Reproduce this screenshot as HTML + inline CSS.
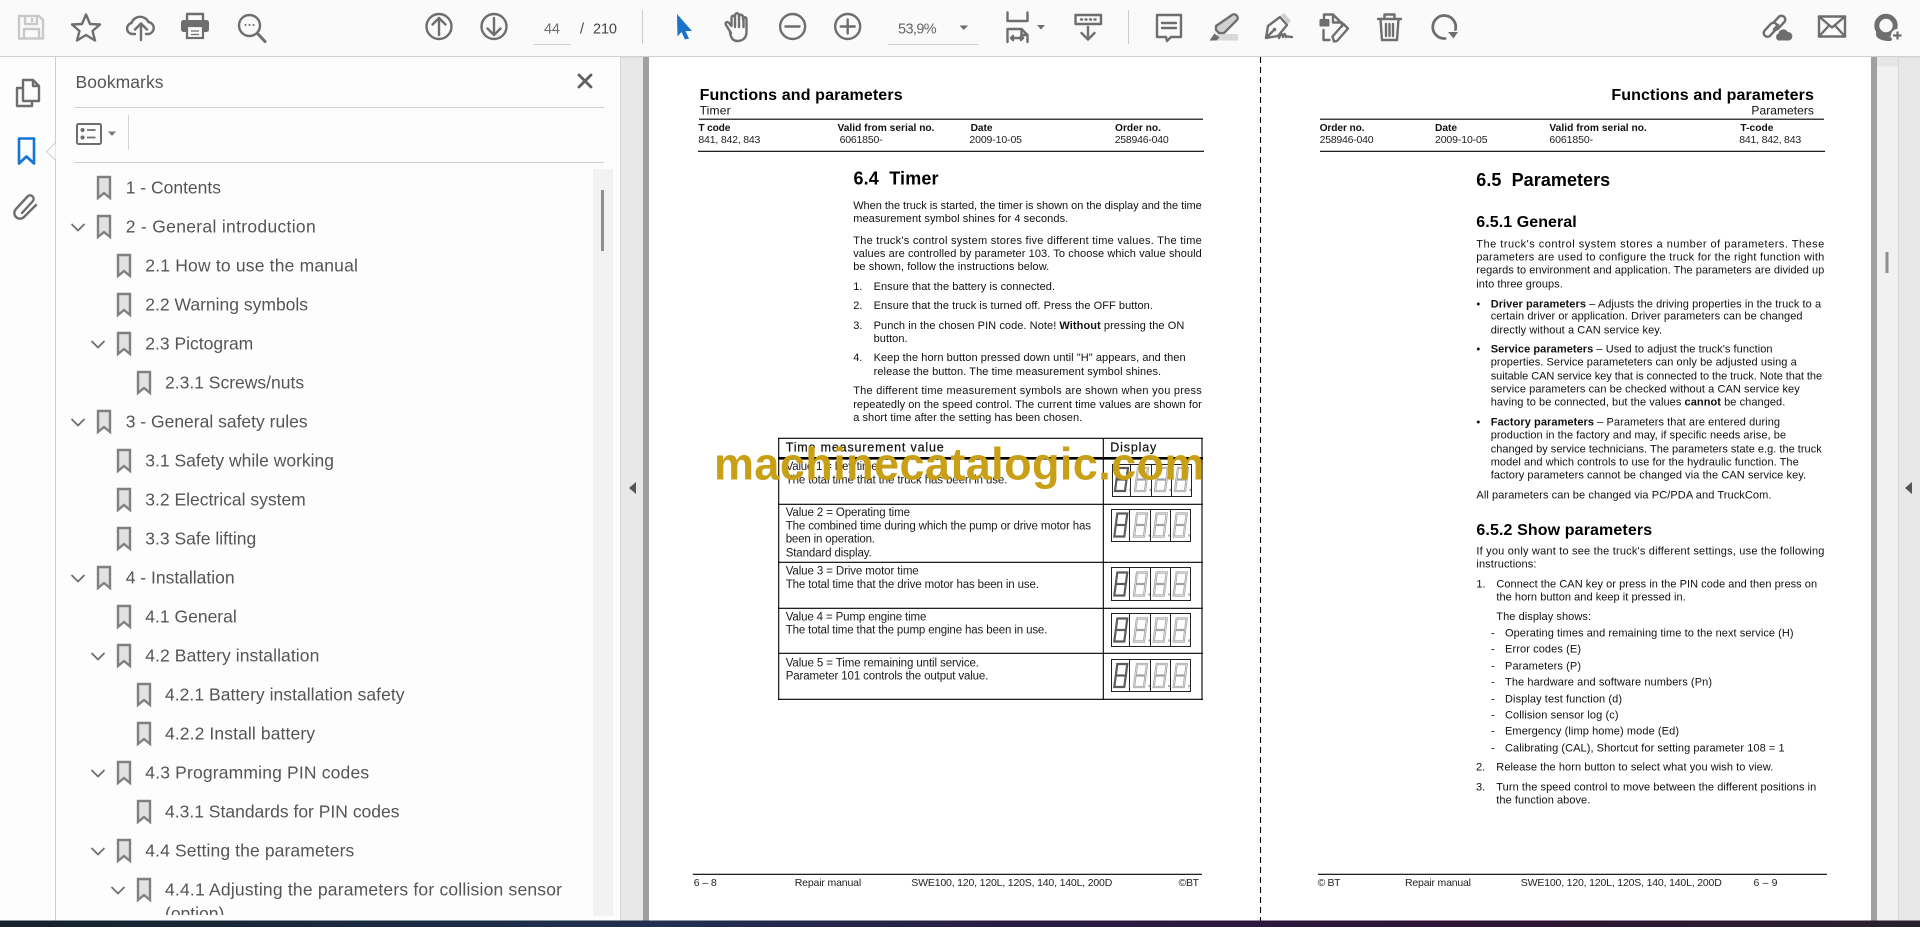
<!DOCTYPE html>
<html lang="en"><head><meta charset="utf-8"><title>Repair manual</title>
<style>
html,body{margin:0;padding:0;width:1920px;height:927px;overflow:hidden;background:#fff}
svg{display:block;font-family:"Liberation Sans",sans-serif}
.i{fill:none;stroke:#6e6e6e;stroke-width:2.400;stroke-linecap:round;stroke-linejoin:round}
.b{font-size:17.5px;fill:#555}
.p{font-size:11px;fill:#111}
.h{font-size:10.200px;font-weight:bold;fill:#111}
.v{font-size:10.500px;fill:#222}
.t{font-size:11.500px;fill:#1c1c1c}
.f{font-size:10.500px;fill:#222}
.g{font-weight:bold;fill:#000}
</style></head><body>
<svg width="1920" height="927" viewBox="0 0 1920 927" xmlns="http://www.w3.org/2000/svg">
<defs><clipPath id="bm"><rect x="56" y="166" width="536" height="749"/></clipPath></defs>
<rect width="1920" height="927" fill="#e8e8e8"/>
<!-- toolbar -->
<rect width="1920" height="56" fill="#fafafa"/>
<rect y="56" width="1920" height="1.400" fill="#cfcfcf"/>
<!-- left rail and panel -->
<rect y="57" width="56" height="864" fill="#fdfdfd"/>
<rect x="55" y="57" width="1" height="864" fill="#cfcfcf"/>
<rect x="56" y="57" width="564" height="864" fill="#fdfdfd"/>
<rect x="620" y="57" width="1" height="864" fill="#d4d4d4"/>
<path d="M55.500 143L46.500 151.500 55.500 160" fill="#fdfdfd" stroke="#cfcfcf"/>
<rect x="56" y="143" width="1" height="17" fill="#fdfdfd"/>
<!-- gutter & pages -->
<rect x="643" y="57" width="6" height="864" fill="#a0a0a0"/>
<rect x="649" y="57" width="1222" height="864" fill="#fff"/>
<rect x="1871" y="57" width="6" height="864" fill="#a0a0a0"/>
<rect x="1877" y="57" width="21" height="864" fill="#f1f1f1"/>
<rect x="1877" y="57" width="21" height="9.500" fill="#e6e6e6"/>
<rect x="1885.500" y="252" width="3" height="21" fill="#8f8f8f"/>
<rect x="1898" y="57" width="1" height="864" fill="#d8d8d8"/>
<path d="M636 482v12l-7-6zM1912 482v12l-7-6z" fill="#555"/>
<path d="M1260.500 57V921" stroke="#000" stroke-width="1.100" stroke-dasharray="6 4"/>
<!-- taskbar -->
<defs><linearGradient id="tb" x1="0" x2="1" y1="0" y2="0"><stop offset="0" stop-color="#15222c"/><stop offset=".34" stop-color="#1f3050"/><stop offset=".52" stop-color="#2a1d45"/><stop offset=".78" stop-color="#2e1335"/><stop offset="1" stop-color="#2a202e"/></linearGradient></defs>
<rect y="920.500" width="1920" height="6.500" fill="url(#tb)"/>

<!-- toolbar icons -->
<path style="fill:none;stroke:#c9c9c9;stroke-width:2.400;stroke-linejoin:round" d="M19 16h20l4 4v18.500H19zM25 16v8h12v-8M32 18v4M24 38v-9h15v9"/>
<g class="i">
<path d="M86 14.500L90 24l10 .5-7.500 6.500 2.500 9.500-9-5.500-9 5.500 2.500-9.500-7.500-6.500 10-.5z"/>
<path d="M135 34h-2.500a5.500 5.500 0 0 1-1-10.900a9 8.500 0 0 1 17-1a6 6 0 0 1 0 11.900h-2.500M141 40V24M135 29.500l6-6 6 6"/>
<path d="M187 20v-6h16v6"/>
<circle cx="249.500" cy="25.500" r="10.500"/>
<path d="M257.500 33.500l7.500 8" stroke-width="3"/>
<circle cx="439" cy="26.500" r="12.500"/><path d="M439 35V18M432.500 24.500l6.500-6.500 6.500 6.500"/>
<circle cx="494" cy="26.500" r="12.500"/><path d="M494 18v17M487.500 28.500l6.500 6.500 6.500-6.500"/>
<path d="M731 33l-5-8c-1.500-2.500 1.500-4 3-2l2.500 3V18c0-3 3.500-3 3.500 0v-2.500c0-3 4-3 4 0V17c0-3 4-3 4 0v2.500c0-3 3.500-3 3.500 0V32c0 6-4 9-9 9-4 0-6-2-7.500-8zM735 18v9M739 16v11M743.500 18v9"/>
<circle cx="792.600" cy="26.500" r="12.500"/><path d="M785.500 26.500h14"/>
<circle cx="847.700" cy="26.500" r="12.500"/><path d="M840.700 26.500h14M847.700 19.500v14"/>
<path d="M1007.500 12.500v8.500h20v-8.500M1007.500 42V29h14l6 6v7M1021.500 29v6h6M1011 38h12M1013 36l-2 2 2 2M1021 36l2 2-2 2"/>
<rect x="1075.500" y="15" width="25.500" height="9"/><path d="M1088 27v12M1081.500 33l6.500 6.500 6.500-6.500M1081 19.500h1M1085.500 19.500h1M1090 19.500h1M1094.500 19.500h1"/>
<path d="M1157 15h24v22h-10l-4 4-1-4h-9zM1162 23h14M1162 28h14"/>
<path d="M1324 19v-4.500h9l9 9v3M1333 14.500v8h9M1323.500 30v10h6M1334 41.500l-1.500-5 11-12.500 4.500 4.500-11 12.500z"/>
<path d="M1378 19h23M1384.500 19v-4.500h10V19M1380.500 19l1.500 21h15l1.500-21M1386 24v12M1389.500 24v12M1393 24v12"/>
<path d="M1445 38.500a11.500 11.500 0 1 1 10.500-9" stroke-width="2.800"/>
<rect x="1819" y="16.500" width="26" height="20"/><path d="M1819 16.500l13 11 13-11M1819 36.500l10-11M1845 36.500l-10-11"/>
</g>
<!-- highlighter -->
<rect x="1217" y="34" width="21" height="6.500" fill="#d8d8d8"/>
<path d="M1232 15a3 3 0 0 1 4 0l1 1a3 3 0 0 1 0 4L1224 33h-5l-3-3v-4z" fill="#d0d0d0" stroke="#6e6e6e" stroke-width="2.300" stroke-linejoin="round"/>
<path d="M1209.500 40.500l5-7 5 4-3 3z" fill="#6e6e6e"/>
<!-- pen nib -->
<path d="M1281 15l3-2 7 8-3 3z" fill="#cfcfcf"/>
<path d="M1266 38l2-12 12-9 7 8-9 11zM1266 38l7-7" class="i"/>
<circle cx="1274.500" cy="29.500" r="1.800" fill="#6e6e6e"/>
<path d="M1279 38c2-5 3-5 4-1 1-4 2-4 3 0 1-1 3 0 6 0" class="i" stroke-width="2"/>
<!-- printer -->
<rect x="181" y="20" width="28" height="12" rx="2.500" fill="#6e6e6e"/>
<rect x="187" y="26" width="16" height="12" fill="#fafafa" stroke="#6e6e6e" stroke-width="2.200"/>
<path d="M191 31h8M191 34.500h8" stroke="#6e6e6e" stroke-width="1.300"/>
<path d="M245.500 25h.1M249.500 25h.1M253.500 25h.1" stroke="#6e6e6e" stroke-width="2" stroke-linecap="round"/>
<path d="M677 14L692 31H685.500L689 38.500 685 39.500 681.500 32 677.500 36.500z" fill="#1a72c9"/>
<rect x="1319.500" y="19" width="10" height="7.500" rx="1" fill="#6e6e6e"/>
<path d="M1448 32h10l-4.500 6.500z" fill="#6e6e6e"/>
<path d="M959.500 25.500h8.500l-4.200 4.500zM1037 25h8l-4 4.500z" fill="#6e6e6e"/>
<!-- chain link + cloud -->
<g fill="none" stroke-linecap="round">
<path d="M1781.500 19.500L1775.500 26" stroke="#6e6e6e" stroke-width="10"/>
<path d="M1781.500 19.500L1775.500 26" stroke="#fafafa" stroke-width="5"/>
<path d="M1767.500 33L1773.500 26.500" stroke="#6e6e6e" stroke-width="10"/>
<path d="M1767.500 33L1773.500 26.500" stroke="#fafafa" stroke-width="5"/>
<path d="M1774 29.500L1778 25" stroke="#6e6e6e" stroke-width="2.600"/>
</g>
<path d="M1778 41a4.500 4.500 0 0 1 0-8a5.500 5.500 0 0 1 10-1.500a4.800 4.800 0 0 1 1 9.500z" fill="#6e6e6e" stroke="#fafafa" stroke-width="1"/>
<!-- user add -->
<circle cx="1886" cy="25.500" r="9.200" fill="none" stroke="#6e6e6e" stroke-width="5"/>
<path d="M1878 33c-1 4 5 6 12 6" fill="none" stroke="#6e6e6e" stroke-width="4" stroke-linecap="round"/>
<circle cx="1897.500" cy="35.500" r="6.500" fill="#fafafa"/>
<path d="M1893 35.500h8.500M1897.500 31.500v8" stroke="#6e6e6e" stroke-width="2.200"/>

<rect x="642" y="10" width="1" height="34" fill="#ccc"/>
<rect x="1128" y="10" width="1" height="34" fill="#ccc"/>
<rect x="534" y="44" width="36.500" height="1" fill="#ccc"/>
<rect x="888" y="44" width="90" height="1" fill="#ccc"/>
<text x="544" y="33.300" font-size="14.500" fill="#6e6e6e" textLength="16">44</text>
<text x="580" y="33.300" font-size="14.500" fill="#444">/</text>
<text x="593" y="33.300" font-size="14.500" fill="#444" textLength="24">210</text>
<text x="898" y="33.300" font-size="14.500" fill="#666" textLength="38.700">53,9%</text>

<!-- rail icons -->
<g class="i">
<path d="M23 80h10l6 6v15H23zM33 80v6h6M23 88h-6v18h15v-5"/>
<path d="M22 213L33 201a3.600 3.600 0 0 0-5-5L16 209a5.500 5.500 0 0 0 8 8L36 205"/>
</g>
<path d="M19 138.500h15v25l-7.500-7-7.500 7z" fill="none" stroke="#1473d6" stroke-width="2.600" stroke-linejoin="round"/>

<!-- panel header -->
<text x="75.500" y="88" font-size="17.500" fill="#555" textLength="88">Bookmarks</text>
<path d="M579 75l12 12M591 75l-12 12" stroke="#606060" stroke-width="2.800" stroke-linecap="round"/>
<rect x="74" y="107" width="530" height="1" fill="#cfcfcf"/>
<rect x="74" y="162" width="530" height="1" fill="#cfcfcf"/>
<rect x="77" y="124" width="24" height="20" rx="1.500" fill="none" stroke="#6e6e6e" stroke-width="2"/>
<path d="M82.500 130h.1M82.500 137.500h.1" stroke="#6e6e6e" stroke-width="4" stroke-linecap="round"/>
<path d="M87 130h8.500M87 137.500h8.500" stroke="#6e6e6e" stroke-width="1.800"/>
<path d="M108 131.500h8l-4 4.500z" fill="#777"/>
<rect x="128" y="115" width="1" height="35" fill="#d4d4d4"/>
<rect x="593" y="169" width="20" height="747" fill="#f2f2f2"/>
<rect x="601" y="190" width="3" height="61" fill="#8f8f8f"/>

<!-- bookmarks -->
<g clip-path="url(#bm)">
<path fill="#e2e2e2" stroke="#808080" stroke-width="2.400" stroke-linejoin="miter" d="M98 177h12v21l-6-5-6 5zM98 216h12v21l-6-5-6 5zM118 255h12v21l-6-5-6 5zM118 294h12v21l-6-5-6 5zM118 333h12v21l-6-5-6 5zM138 372h12v21l-6-5-6 5zM98 411h12v21l-6-5-6 5zM118 450h12v21l-6-5-6 5zM118 489h12v21l-6-5-6 5zM118 528h12v21l-6-5-6 5zM98 567h12v21l-6-5-6 5zM118 606h12v21l-6-5-6 5zM118 645h12v21l-6-5-6 5zM138 684h12v21l-6-5-6 5zM138 723h12v21l-6-5-6 5zM118 762h12v21l-6-5-6 5zM138 801h12v21l-6-5-6 5zM118 840h12v21l-6-5-6 5zM138 879h12v21l-6-5-6 5z"/>
<path fill="none" stroke="#6e6e6e" stroke-width="1.700" d="M71.500 224l6.500 6.500 6.500-6.500M71.500 419l6.500 6.500 6.500-6.500M71.500 575l6.500 6.500 6.500-6.500M91.500 341l6.500 6.500 6.500-6.500M91.500 653l6.500 6.500 6.500-6.500M91.500 770l6.500 6.500 6.500-6.500M91.500 848l6.500 6.500 6.500-6.500M111.500 887l6.500 6.500 6.500-6.500"/>
<text class="b" x="125.700" y="193.600">1 - Contents</text>
<text class="b" x="125.700" y="232.600" textLength="190">2 - General introduction</text>
<text class="b" x="145.300" y="271.600" textLength="212.600">2.1 How to use the manual</text>
<text class="b" x="145.300" y="310.600">2.2 Warning symbols</text>
<text class="b" x="145.300" y="349.600">2.3 Pictogram</text>
<text class="b" x="165" y="388.600">2.3.1 Screws/nuts</text>
<text class="b" x="125.700" y="427.600">3 - General safety rules</text>
<text class="b" x="145.300" y="466.600">3.1 Safety while working</text>
<text class="b" x="145.300" y="505.600">3.2 Electrical system</text>
<text class="b" x="145.300" y="544.600">3.3 Safe lifting</text>
<text class="b" x="125.700" y="583.600">4 - Installation</text>
<text class="b" x="145.300" y="622.600">4.1 General</text>
<text class="b" x="145.300" y="661.600" textLength="174">4.2 Battery installation</text>
<text class="b" x="165" y="700.600" textLength="239.500">4.2.1 Battery installation safety</text>
<text class="b" x="165" y="739.600" textLength="150">4.2.2 Install battery</text>
<text class="b" x="145.300" y="778.600" textLength="223.800">4.3 Programming PIN codes</text>
<text class="b" x="165" y="817.600" textLength="234.500">4.3.1 Standards for PIN codes</text>
<text class="b" x="145.300" y="856.600" textLength="209">4.4 Setting the parameters</text>
<text class="b" x="165" y="895.600" textLength="397">4.4.1 Adjusting the parameters for collision sensor</text>
<text class="b" x="165" y="919.600">(option)</text>
</g>

<!-- LEFT PAGE -->
<text class="g" x="699.600" y="100" font-size="16" textLength="203">Functions and parameters</text>
<text x="699.600" y="114.300" font-size="12" fill="#111" textLength="31">Timer</text>
<path d="M699 119.200H1203M698 151.300H1204" stroke="#000" stroke-width="1.100"/>
<text class="h" x="698.400" y="131" textLength="32">T code</text>
<text class="h" x="837.500" y="131" textLength="97">Valid from serial no.</text>
<text class="h" x="970.600" y="131" textLength="22">Date</text>
<text class="h" x="1115" y="131" textLength="46">Order no.</text>
<text class="v" x="698.400" y="143" textLength="62">841, 842, 843</text>
<text class="v" x="839.600" y="143" textLength="43">6061850-</text>
<text class="v" x="969.400" y="143" textLength="52.600">2009-10-05</text>
<text class="v" x="1114.700" y="143" textLength="54">258946-040</text>
<text class="g" x="853.500" y="184.700" font-size="18" xml:space="preserve" textLength="85">6.4  Timer</text>

<text class="p" x="853.200" y="209" textLength="348.600">When the truck is started, the timer is shown on the display and the time</text>
<text class="p" x="853.200" y="222" textLength="215">measurement symbol shines for 4 seconds.</text>
<text class="p" x="853.200" y="244" textLength="348.600">The truck's control system stores five different time values. The time</text>
<text class="p" x="853.200" y="257" textLength="348.600">values are controlled by parameter 103. To choose which value should</text>
<text class="p" x="853.200" y="270" textLength="196">be shown, follow the instructions below.</text>
<text class="p" x="853.200" y="290">1.</text>
<text class="p" x="873.600" y="290" textLength="181.400">Ensure that the battery is connected.</text>
<text class="p" x="853.200" y="309">2.</text>
<text class="p" x="873.600" y="309" textLength="279.300">Ensure that the truck is turned off. Press the OFF button.</text>
<text class="p" x="853.200" y="329">3.</text>
<text class="p" x="873.600" y="329" textLength="310.700">Punch in the chosen PIN code. Note! <tspan font-weight="bold">Without</tspan> pressing the ON</text>
<text class="p" x="873.600" y="342" textLength="34">button.</text>
<text class="p" x="853.200" y="361">4.</text>
<text class="p" x="873.600" y="361" textLength="312">Keep the horn button pressed down until "H" appears, and then</text>
<text class="p" x="873.600" y="375" textLength="287.500">release the button. The time measurement symbol shines.</text>
<text class="p" x="853.200" y="394" textLength="348.600">The different time measurement symbols are shown when you press</text>
<text class="p" x="853.200" y="408" textLength="348.600">repeatedly on the speed control. The current time values are shown for</text>
<text class="p" x="853.200" y="421" textLength="229">a short time after the setting has been chosen.</text>

<!-- table -->
<path d="M778 438.300H1203M778 504.300H1203M778 562.300H1203M778 608.300H1203M778 653.300H1203M778 699.300H1203M778.700 438V700M1103.300 438V700M1202 438V700" stroke="#000" stroke-width="1.100" fill="none"/>
<path d="M778 458.300H1203" stroke="#000" stroke-width="2.600"/>
<text x="785.700" y="451.300" font-size="12.500" fill="#111" stroke="#111" stroke-width=".2" textLength="158">Time measurement value</text>
<text x="1110.300" y="451.300" font-size="12.500" fill="#111" stroke="#111" stroke-width=".2" textLength="46">Display</text>
<text class="t" x="785.700" y="470" textLength="92">Value 1 = Key time</text>
<text class="t" x="785.700" y="483.300" textLength="221.700">The total time that the truck has been in use.</text>
<text class="t" x="785.700" y="516" textLength="124.300">Value 2 = Operating time</text>
<text class="t" x="785.700" y="529.300" textLength="305.300">The combined time during which the pump or drive motor has</text>
<text class="t" x="785.700" y="542.300" textLength="89.300">been in operation.</text>
<text class="t" x="785.700" y="556.300" textLength="86">Standard display.</text>
<text class="t" x="785.700" y="574.300" textLength="133">Value 3 = Drive motor time</text>
<text class="t" x="785.700" y="588" textLength="253.300">The total time that the drive motor has been in use.</text>
<text class="t" x="785.700" y="620.300" textLength="140.700">Value 4 = Pump engine time</text>
<text class="t" x="785.700" y="633.300" textLength="261.700">The total time that the pump engine has been in use.</text>
<text class="t" x="785.700" y="666.300" textLength="193.300">Value 5 = Time remaining until service.</text>
<text class="t" x="785.700" y="679.300" textLength="202.700">Parameter 101 controls the output value.</text>

<!-- display boxes -->
<path fill="none" stroke="#222" stroke-width="1" d="M1112.500 464.500h79v32h-79zM1130.500 464.500v32M1151.500 464.500v32M1171.500 464.500v32M1111.500 509.500h79v32h-79zM1129.500 509.500v32M1150.500 509.500v32M1170.500 509.500v32M1111.500 567.500h79v33h-79zM1129.500 567.500v33M1150.500 567.500v33M1170.500 567.500v33M1111.500 613.500h79v33h-79zM1129.500 613.500v33M1150.500 613.500v33M1170.500 613.500v33M1111.500 659.500h79v32h-79zM1129.500 659.500v32M1150.500 659.500v32M1170.500 659.500v32"/>
<path fill="none" stroke="#a2a2a2" stroke-width="2.200" d="M1138 468h10l-3 23h-10zm-1.500 11.500h10m3 10.500h1.500M1158 468h10l-3 23h-10zm-1.500 11.500h10m3 10.500h1.500M1178 468h10l-3 23h-10zm-1.500 11.500h10m3 10.500h1.500M1137 513.500h10l-3 23h-10zm-1.500 11.500h10m3 10.500h1.500M1156.700 513.500h10l-3 23h-10zm-1.500 11.500h10m3 10.500h1.500M1176.700 513.500h10l-3 23h-10zm-1.500 11.500h10m3 10.500h1.500M1137 572.500h10l-3 23h-10zm-1.500 11.500h10m3 10.500h1.500M1156.700 572.500h10l-3 23h-10zm-1.500 11.500h10m3 10.500h1.500M1176.700 572.500h10l-3 23h-10zm-1.500 11.500h10m3 10.500h1.500M1137 618.500h10l-3 23h-10zm-1.500 11.500h10m3 10.500h1.500M1156.700 618.500h10l-3 23h-10zm-1.500 11.500h10m3 10.500h1.500M1176.700 618.500h10l-3 23h-10zm-1.500 11.500h10m3 10.500h1.500M1137 664h10l-3 23h-10zm-1.500 11.500h10m3 10.500h1.500M1156.700 664h10l-3 23h-10zm-1.500 11.500h10m3 10.500h1.500M1176.700 664h10l-3 23h-10zm-1.500 11.500h10m3 10.500h1.500"/>
<path fill="none" stroke="#5c5c5c" stroke-width="2.200" d="M1118 468h10l-3 23h-10zm-1.500 11.500h10m3 10.500h1M1117.300 513.500h10l-3 23h-10zm-1.500 11.500h10m3 10.500h1M1117.300 572.500h10l-3 23h-10zm-1.500 11.500h10m3 10.500h1M1117.300 618.500h10l-3 23h-10zm-1.500 11.500h10m3 10.500h1M1117.300 664h10l-3 23h-10zm-1.500 11.500h10m3 10.500h1"/>
<path fill="none" stroke="#e6e6e6" stroke-width=".7" d="M1138 468h10l-3 23h-10zM1158 468h10l-3 23h-10zM1178 468h10l-3 23h-10zM1137 513.500h10l-3 23h-10zM1156.700 513.500h10l-3 23h-10zM1176.700 513.500h10l-3 23h-10zM1137 572.500h10l-3 23h-10zM1156.700 572.500h10l-3 23h-10zM1176.700 572.500h10l-3 23h-10zM1137 618.500h10l-3 23h-10zM1156.700 618.500h10l-3 23h-10zM1176.700 618.500h10l-3 23h-10zM1137 664h10l-3 23h-10zM1156.700 664h10l-3 23h-10zM1176.700 664h10l-3 23h-10z"/>

<!-- left footer -->
<path d="M692.800 874.300H1202" stroke="#000" stroke-width="1.100"/>
<text class="f" x="693.700" y="886" textLength="23">6 – 8</text>
<text class="f" x="794.700" y="886" textLength="66.500">Repair manual</text>
<text class="f" x="911.300" y="886" textLength="201">SWE100, 120, 120L, 120S, 140, 140L, 200D</text>
<text class="f" x="1178.500" y="886" textLength="20.600">©BT</text>

<!-- RIGHT PAGE -->
<text class="g" x="1611.400" y="100" font-size="16" textLength="202.500">Functions and parameters</text>
<text x="1751.400" y="114.300" font-size="12" fill="#111" textLength="62.500">Parameters</text>
<path d="M1320 119.200H1824M1320 151.300H1825" stroke="#000" stroke-width="1.100"/>
<text class="h" x="1319.600" y="131" textLength="45">Order no.</text>
<text class="h" x="1435" y="131" textLength="22">Date</text>
<text class="h" x="1549.400" y="131" textLength="97.500">Valid from serial no.</text>
<text class="h" x="1740.400" y="131" textLength="33">T-code</text>
<text class="v" x="1319.600" y="143" textLength="54">258946-040</text>
<text class="v" x="1435" y="143" textLength="52.600">2009-10-05</text>
<text class="v" x="1549.400" y="143" textLength="43.700">6061850-</text>
<text class="v" x="1739.200" y="143" textLength="62">841, 842, 843</text>
<text class="g" x="1476.300" y="186" font-size="18" xml:space="preserve" textLength="133.900">6.5  Parameters</text>
<text class="g" x="1476.300" y="227" font-size="16" textLength="100.400">6.5.1 General</text>
<text class="p" x="1476.300" y="247.300" textLength="348">The truck's control system stores a number of parameters. These</text>
<text class="p" x="1476.300" y="260.300" textLength="348">parameters are used to configure the truck for the right function with</text>
<text class="p" x="1476.300" y="273.300" textLength="348">regards to environment and application. The parameters are divided up</text>
<text class="p" x="1476.300" y="287.300" textLength="86.500">into three groups.</text>

<text class="p" x="1476.400" y="307.300">•</text>
<text class="p" x="1490.700" y="307.300" textLength="330.400"><tspan font-weight="bold">Driver parameters</tspan> – Adjusts the driving properties in the truck to a</text>
<text class="p" x="1490.700" y="319.300" textLength="311.800">certain driver or application. Driver parameters can be changed</text>
<text class="p" x="1490.700" y="333.300" textLength="171.400">directly without a CAN service key.</text>
<text class="p" x="1476.400" y="352.300">•</text>
<text class="p" x="1490.700" y="352.300" textLength="281.800"><tspan font-weight="bold">Service parameters</tspan> – Used to adjust the truck's function</text>
<text class="p" x="1490.700" y="365.300" textLength="306">properties. Service parameteters can only be adjusted using a</text>
<text class="p" x="1490.700" y="379.300" textLength="331.400">suitable CAN service key that is connected to the truck. Note that the</text>
<text class="p" x="1490.700" y="392.300" textLength="309">service parameters can be checked without a CAN service key</text>
<text class="p" x="1490.700" y="405.300" textLength="294.600">having to be connected, but the values <tspan font-weight="bold">cannot</tspan> be changed.</text>
<text class="p" x="1476.400" y="425.300">•</text>
<text class="p" x="1490.700" y="425.300" textLength="289.300"><tspan font-weight="bold">Factory parameters</tspan> – Parameters that are entered during</text>
<text class="p" x="1490.700" y="438.300" textLength="295.400">production in the factory and may, if specific needs arise, be</text>
<text class="p" x="1490.700" y="452.300" textLength="331">changed by service technicians. The parameters state e.g. the truck</text>
<text class="p" x="1490.700" y="465.300" textLength="308">model and which controls to use for the hydraulic function. The</text>
<text class="p" x="1490.700" y="478.300" textLength="315.400">factory parameters cannot be changed via the CAN service key.</text>
<text class="p" x="1476.400" y="498.300" textLength="295">All parameters can be changed via PC/PDA and TruckCom.</text>
<text class="g" x="1476.400" y="535" font-size="16" textLength="175.700">6.5.2 Show parameters</text>
<text class="p" x="1476.400" y="554.300" textLength="348">If you only want to see the truck's different settings, use the following</text>
<text class="p" x="1476.400" y="567.300" textLength="60">instructions:</text>
<text class="p" x="1476.400" y="587.300">1.</text>
<text class="p" x="1496.400" y="587.300" textLength="320.700">Connect the CAN key or press in the PIN code and then press on</text>
<text class="p" x="1496.400" y="600.300" textLength="189.300">the horn button and keep it pressed in.</text>
<text class="p" x="1496.300" y="620" textLength="94.700">The display shows:</text>
<text class="p" x="1491" y="636.300">-</text><text class="p" x="1505" y="636.300" textLength="288.600">Operating times and remaining time to the next service (H)</text>
<text class="p" x="1491" y="652.300">-</text><text class="p" x="1505" y="652.300" textLength="76">Error codes (E)</text>
<text class="p" x="1491" y="669.300">-</text><text class="p" x="1505" y="669.300" textLength="76">Parameters (P)</text>
<text class="p" x="1491" y="685.300">-</text><text class="p" x="1505" y="685.300" textLength="207">The hardware and software numbers (Pn)</text>
<text class="p" x="1491" y="702.300">-</text><text class="p" x="1505" y="702.300" textLength="117">Display test function (d)</text>
<text class="p" x="1491" y="718.300">-</text><text class="p" x="1505" y="718.300" textLength="113.500">Collision sensor log (c)</text>
<text class="p" x="1491" y="734.300">-</text><text class="p" x="1505" y="734.300" textLength="174">Emergency (limp home) mode (Ed)</text>
<text class="p" x="1491" y="751.300">-</text><text class="p" x="1505" y="751.300" textLength="279.600">Calibrating (CAL), Shortcut for setting parameter 108 = 1</text>
<text class="p" x="1476" y="770.300">2.</text>
<text class="p" x="1496.300" y="770.300" textLength="277">Release the horn button to select what you wish to view.</text>
<text class="p" x="1476" y="790.300">3.</text>
<text class="p" x="1496.300" y="790.300" textLength="320">Turn the speed control to move between the different positions in</text>
<text class="p" x="1496.300" y="803.300" textLength="94">the function above.</text>

<!-- right footer -->
<path d="M1318 874.300H1827" stroke="#000" stroke-width="1.100"/>
<text class="f" x="1317.600" y="886" textLength="23">© BT</text>
<text class="f" x="1405" y="886" textLength="66">Repair manual</text>
<text class="f" x="1520.800" y="886" textLength="201">SWE100, 120, 120L, 120S, 140, 140L, 200D</text>
<text class="f" x="1753.500" y="886" textLength="24">6 – 9</text>

<!-- watermark -->
<text x="714" y="479.700" font-size="45" font-weight="bold" fill="#c9a015" textLength="490.500">machinecatalogic.com</text>
</svg>
</body></html>
